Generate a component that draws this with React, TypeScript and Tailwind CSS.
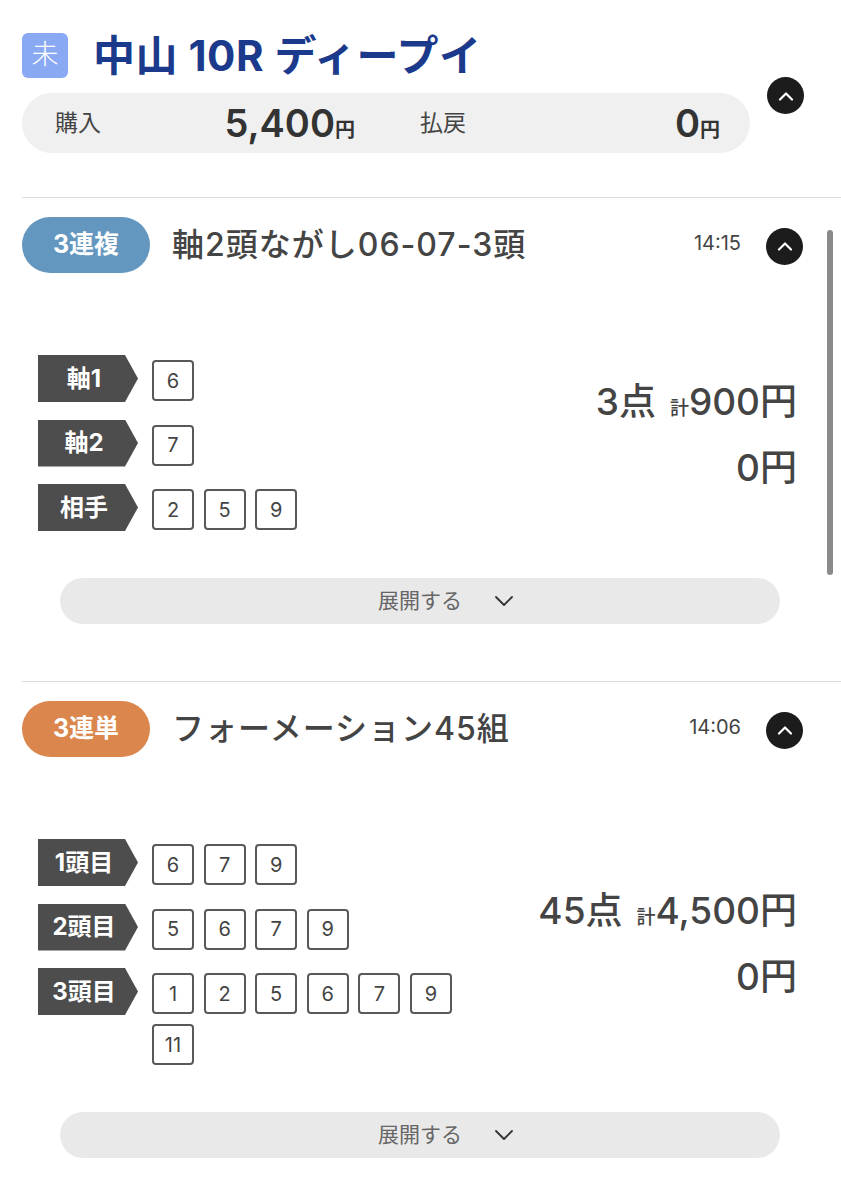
import React from 'react';

type Row = { label: string; nums: number[] };

const SECTIONS = [
  {
    kind: '3連複',
    badge: 'bg-[#6497c0]',
    title: '軸2頭ながし06-07-3頭',
    time: '14:15',
    rows: [
      { label: '軸1', nums: [6] },
      { label: '軸2', nums: [7] },
      { label: '相手', nums: [2, 5, 9] },
    ] as Row[],
    points: '3点',
    total: '900円',
    scrollbar: true,
  },
  {
    kind: '3連単',
    badge: 'bg-[#da864d]',
    title: 'フォーメーション45組',
    time: '14:06',
    rows: [
      { label: '1頭目', nums: [6, 7, 9] },
      { label: '2頭目', nums: [5, 6, 7, 9] },
      { label: '3頭目', nums: [1, 2, 5, 6, 7, 9, 11] },
    ] as Row[],
    points: '45点',
    total: '4,500円',
    scrollbar: false,
  },
];

function UpButton() {
  return (
    <div className="w-[37px] h-[37px] rounded-full bg-[#1c1c1c] flex items-center justify-center shrink-0">
      <svg width="16" height="10" viewBox="0 0 16 10" fill="none">
        <path d="M2 8.5L8 2.5L14 8.5" stroke="white" strokeWidth="2.2" strokeLinecap="round" strokeLinejoin="round" />
      </svg>
    </div>
  );
}

function Tag({ text }: { text: string }) {
  return (
    <div className="w-[100px] h-[47px] shrink-0 bg-[#4d4d4d] text-white text-[24px] font-bold flex items-center justify-center pr-[8px] [clip-path:polygon(0_0,87%_0,100%_50%,87%_100%,0_100%)]">
      {text}
    </div>
  );
}

function NumBox({ n }: { n: number }) {
  return (
    <div className="w-[42px] h-[41px] border-2 border-[#595959] rounded-[4px] flex items-center justify-center text-[20px] text-[#444]">
      {n}
    </div>
  );
}

function ExpandButton() {
  return (
    <div className="ml-[38px] w-[720px] h-[46px] rounded-full bg-[#e9e9e9] flex items-center justify-center">
      <span className="relative text-[21px] text-[#666]">
        展開する
        <svg className="absolute left-[calc(100%+32px)] top-1/2 -translate-y-1/2" width="20" height="12" viewBox="0 0 20 12" fill="none">
          <path d="M2 2L10 10L18 2" stroke="#333" strokeWidth="1.8" strokeLinecap="round" strokeLinejoin="round" />
        </svg>
      </span>
    </div>
  );
}

function Section({ s }: { s: (typeof SECTIONS)[0] }) {
  return (
    <div className="relative pl-[22px]">
      <div className="h-px bg-[#dcdcdc]" />
      {s.scrollbar && (
        <div className="absolute top-[33px] right-[8px] w-[6px] h-[345px] rounded-full bg-[#8a8a8a]" />
      )}
      <div className="mt-[19px] flex items-center h-[56px] pr-[38px]">
        <div className={`w-[128px] h-[56px] rounded-full ${s.badge} text-white text-[25px] font-bold flex items-center justify-center`}>
          {s.kind}
        </div>
        <div className="ml-[22px] text-[32px] font-medium text-[#444] tracking-[1px]">{s.title}</div>
        <div className="flex-1" />
        <div className="text-[20px] text-[#444] mt-[-4px]">{s.time}</div>
        <div className="ml-[25px] mt-[2px]">
          <UpButton />
        </div>
      </div>
      <div className="mt-[82px] flex">
        <div className="pl-[16px] flex flex-col gap-[17.5px]">
          {s.rows.map((r) => (
            <div key={r.label} className="flex items-start">
              <Tag text={r.label} />
              <div className="ml-[14px] mt-[5px] w-[310px] flex flex-wrap gap-x-[9.6px] gap-y-[10px]">
                {r.nums.map((n) => (
                  <NumBox key={n} n={n} />
                ))}
              </div>
            </div>
          ))}
        </div>
        <div className="flex-1 flex flex-col items-end justify-center pr-[44px] pb-[18px] text-[#444] font-medium leading-[59px]">
          <div className="flex items-baseline text-[37px]">
            <span>{s.points}</span>
            <span className="ml-[14px] text-[19px]">計</span>
            <span>{s.total}</span>
          </div>
          <div className="text-[37px]">0円</div>
        </div>
      </div>
      <div className="mt-[47px] mb-[57px]">
        <ExpandButton />
      </div>
    </div>
  );
}

export default function App() {
  return (
    <div className="w-[841px] min-h-[1200px] bg-white text-[#444] [font-family:Inter,'Noto_Sans_CJK_JP','Noto_Sans',sans-serif]">
      <div className="pt-[33px] pl-[22px]">
        <div className="flex items-center">
          <div className="w-[46px] h-[45px] rounded-[6px] bg-[#8aa9f3] text-white text-[27px] font-light flex items-center justify-center">
            未
          </div>
          <div className="ml-[25px] text-[42px] font-bold text-[#1b3a8c] leading-none tracking-[0.5px]">中山 10R ディープイ</div>
        </div>
        <div className="flex items-start mt-[-1px]">
          <div className="mt-[16px] w-[728px] h-[60px] rounded-full bg-[#f0f0f0] flex items-center">
            <div className="flex-1 flex items-center justify-between pl-[33px] pr-[31px]">
              <span className="text-[23px] text-[#444]">購入</span>
              <span className="text-[#333] font-semibold flex items-baseline">
                <span className="text-[38px]">5,400</span>
                <span className="text-[20px]">円</span>
              </span>
            </div>
            <div className="flex-1 flex items-center justify-between pl-[34px] pr-[30px]">
              <span className="text-[23px] text-[#444]">払戻</span>
              <span className="text-[#333] font-semibold flex items-baseline">
                <span className="text-[38px]">0</span>
                <span className="text-[20px]">円</span>
              </span>
            </div>
          </div>
          <div className="ml-[17px]">
            <UpButton />
          </div>
        </div>
      </div>
      <div className="mt-[44px]">
        {SECTIONS.map((s) => (
          <Section key={s.kind} s={s} />
        ))}
      </div>
    </div>
  );
}
